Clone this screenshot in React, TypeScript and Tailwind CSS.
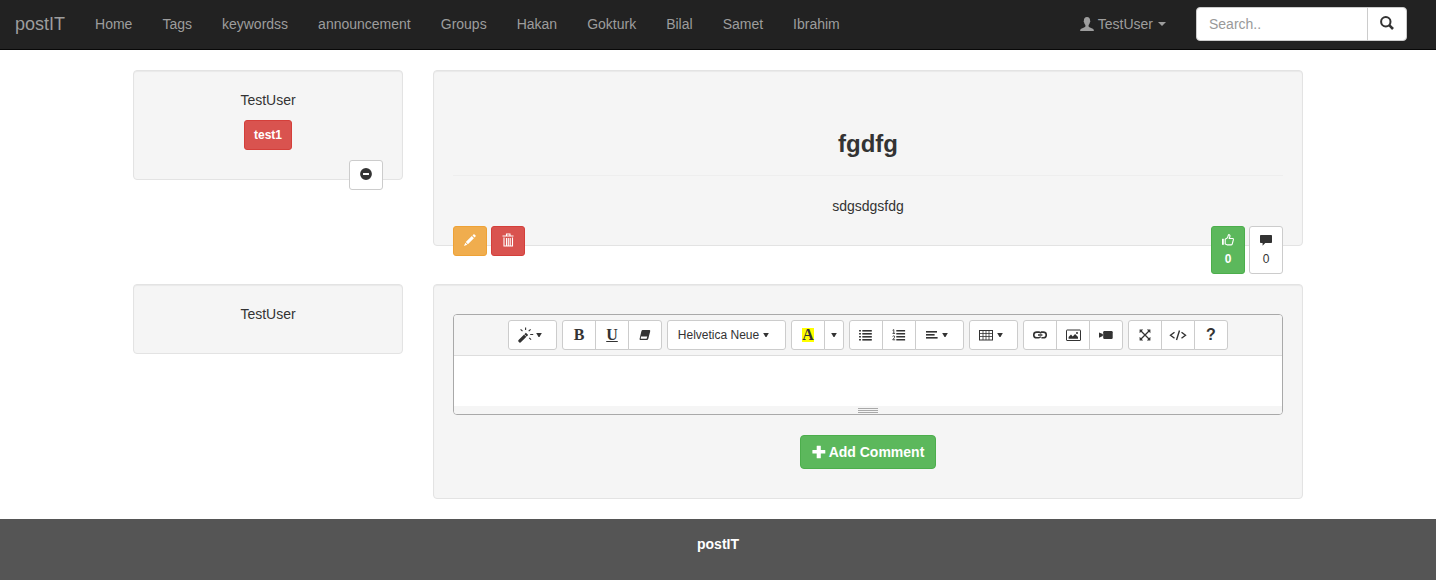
import type { ButtonHTMLAttributes, ReactNode } from "react";

const navLinks = ["Home", "Tags", "keywordss", "announcement", "Groups", "Hakan", "Gokturk", "Bilal", "Samet", "Ibrahim"];

function Well({ children, className = "" }: { children: ReactNode; className?: string }) {
  return (
    <section
      className={`rounded-[4px] border border-[#e3e3e3] bg-[#f5f5f5] p-[19px] text-center shadow-[inset_0_1px_1px_rgba(0,0,0,0.05)] ${className}`}
    >
      {children}
    </section>
  );
}

function Svg({ w, h, children }: { w: number; h: number; children: ReactNode }) {
  return (
    <svg width={w} height={h} viewBox={`0 0 ${w} ${h}`} fill="currentColor" aria-hidden="true" className="block shrink-0">
      {children}
    </svg>
  );
}

function Caret() {
  return (
    <Svg w={6} h={4}>
      <path d="M0.2 0h5.6L3.500 4h-1z" />
    </Svg>
  );
}

type ToolProps = ButtonHTMLAttributes<HTMLButtonElement> & { label: string };

function Tool({ label, className = "", children, ...rest }: ToolProps) {
  return (
    <button
      type="button"
      aria-label={label}
      className={`-ml-px flex h-[30px] items-center justify-center border border-[#ccc] bg-white text-[12px] leading-[18px] text-[#333] first:ml-0 first:rounded-l-[3px] last:rounded-r-[3px] ${className || "w-[34px]"}`}
      {...rest}
    >
      {children}
    </button>
  );
}

function Group({ children }: { children: ReactNode }) {
  return <div className="flex">{children}</div>;
}

function MagicIcon() {
  return (
    <Svg w={16} h={16}>
      <path d="M0.3 13.300 L7.900 5.700 L10.200 8 L2.600 15.500 Q1.600 15.900 .8 15.100 Q0 14.300 .3 13.300z" />
      <path d="M6 7.200l2.500 2.500" stroke="#fff" strokeWidth="0.8" />
      <path d="M7.600 0.500v2.600M2.600 2.300l1.900 1.900M12.600 2.300l-1.900 1.900M12.200 7.500h3M11.200 10.800l1.900 1.900" fill="none" stroke="currentColor" strokeWidth="1.1" />
    </Svg>
  );
}

function EraserIcon() {
  return (
    <Svg w={12} h={12}>
      <path d="M3.700 1h6.600q1.200 0 .9 1.200L9.300 9.800q-.4 1.200-1.500 1.200H1.500q-1.200 0-.9-1.200L2.400 2.200q.3-1.200 1.300-1.200z" />
      <path d="M2 7.400h6.300l-.7 2.400H1.700z" fill="#fff" />
    </Svg>
  );
}

function BulletsIcon() {
  return (
    <Svg w={14} h={12}>
      {[1, 4, 7, 10].map((y) => (
        <g key={y}>
          <rect x="0" y={y} width="2" height="1.6" rx=".5" />
          <rect x="3.3" y={y} width="9.5" height="1.6" />
        </g>
      ))}
    </Svg>
  );
}

function NumbersIcon() {
  return (
    <Svg w={14} h={12}>
      {[1, 4, 7, 10].map((y) => (
        <rect key={y} x="4.3" y={y} width="8.800" height="1.5" />
      ))}
      <path d="M0.6 1.300L1.800.6V4.400M0.500 4.400h2.600M0.600 7.400Q1.700 6.400 2.600 7.200Q3.200 8.200.7 10.800H3.200" fill="none" stroke="currentColor" strokeWidth="0.9" />
    </Svg>
  );
}

function AlignIcon() {
  return (
    <Svg w={12} h={10}>
      <rect x="0" y="1" width="11" height="1.6" />
      <rect x="0" y="4" width="8.6" height="1.6" />
      <rect x="0" y="7" width="11.6" height="1.6" />
    </Svg>
  );
}

function TableIcon() {
  return (
    <Svg w={14} h={12}>
      <path d="M4 1v10M7 1v10M10 1v10M.5 4.500h13M.5 7.500h13" fill="none" stroke="currentColor" strokeWidth="0.8" />
      <rect x=".5" y="1.500" width="13" height="9.500" fill="none" stroke="currentColor" strokeWidth="1" />
    </Svg>
  );
}

function LinkIcon() {
  return (
    <Svg w={14} h={8}>
      <path d="M6 1.100H3.600a2.800 2.800 0 0 0 0 5.700h2q1.400 0 2-1.300M8 1.100h2.400a2.800 2.800 0 0 1 0 5.700h-2M6 1.100q1.500.1 2.200 1.300M5 4h4.400" fill="none" stroke="currentColor" strokeWidth="1.6" />
    </Svg>
  );
}

function PictureIcon() {
  return (
    <Svg w={15} h={12}>
      <rect x=".5" y="1" width="14" height="10.500" rx=".5" fill="none" stroke="currentColor" />
      <path d="M2.600 9.700V7.900L5 5.600l1.700 1.800 2.400-2.500 2.900 3.100v1.700z" />
      <circle cx="11" cy="4" r="1" />
    </Svg>
  );
}

function VideoIcon() {
  return (
    <Svg w={14} h={8}>
      <path d="M0 1.400L3.800 3v2L0 6.800z" />
      <rect x="4.200" y="0" width="9.500" height="8" rx="1.200" />
    </Svg>
  );
}

function ExpandIcon() {
  return (
    <Svg w={12} h={12}>
      <path d="M1.500 1.500l9 9M10.500 1.500l-9 9" stroke="currentColor" strokeWidth="1.3" />
      <path d="M.6.6h3.600L.6 4.200zM11.400.6v3.600L7.800.6zM.6 11.400V7.800l3.600 3.600zM11.400 11.400H7.800l3.600-3.600z" />
    </Svg>
  );
}

function CodeIcon() {
  return (
    <Svg w={18} h={12}>
      <path d="M5.500 3.200L1.500 6.200l4 3M12.500 3.200l4 3-4 3M10.500 1.500L7.500 11" fill="none" stroke="currentColor" strokeWidth="1.400" />
    </Svg>
  );
}

function Toolbar() {
  return (
    <div className="flex flex-wrap justify-center gap-[5px] border-b border-[#ddd] bg-[#f5f5f5] py-[5px]">
      <Group>
        <Tool label="Style" className="w-[49px] gap-0.5 pr-1.5">
          <MagicIcon />
          <Caret />
        </Tool>
      </Group>
      <Group>
        <Tool label="Bold">
          <span className="font-['Liberation_Serif',serif] text-[16px] font-bold">B</span>
        </Tool>
        <Tool label="Underline">
          <span className="font-['Liberation_Serif',serif] text-[16px] font-bold underline decoration-1 underline-offset-1">U</span>
        </Tool>
        <Tool label="Remove font style">
          <EraserIcon />
        </Tool>
      </Group>
      <Group>
        <Tool label="Helvetica Neue" className="w-[119px] gap-1 pr-1.5">
          <span>Helvetica Neue</span>
          <Caret />
        </Tool>
      </Group>
      <Group>
        <Tool label="Recent color">
          <span className="flex h-[14px] w-[12px] items-center justify-center bg-[#ff0] font-['Liberation_Serif',serif] text-[16px] leading-[16px] font-bold">A</span>
        </Tool>
        <Tool label="More colors" className="w-[20px]">
          <Caret />
        </Tool>
      </Group>
      <Group>
        <Tool label="Unordered list">
          <BulletsIcon />
        </Tool>
        <Tool label="Ordered list">
          <NumbersIcon />
        </Tool>
        <Tool label="Paragraph" className="w-[49px] gap-1 pr-1.5">
          <AlignIcon />
          <Caret />
        </Tool>
      </Group>
      <Group>
        <Tool label="Table" className="w-[49px] gap-1 pr-1.5">
          <TableIcon />
          <Caret />
        </Tool>
      </Group>
      <Group>
        <Tool label="Link">
          <LinkIcon />
        </Tool>
        <Tool label="Picture">
          <PictureIcon />
        </Tool>
        <Tool label="Video">
          <VideoIcon />
        </Tool>
      </Group>
      <Group>
        <Tool label="Full screen">
          <ExpandIcon />
        </Tool>
        <Tool label="Code view">
          <CodeIcon />
        </Tool>
        <Tool label="Help">
          <span className="text-[16px] font-bold">?</span>
        </Tool>
      </Group>
    </div>
  );
}

function Navbar() {
  return (
    <header className="flex min-h-[50px] flex-wrap items-center justify-between border-b border-[#080808] bg-[#222] pr-[29px] pb-0.5 pl-[15px] text-[#9d9d9d]">
      <nav className="flex flex-wrap items-center gap-x-[30px]">
        <a href="#" className="text-[18px] leading-[20px]">postIT</a>
        {navLinks.map((name) => (
          <a key={name} href="#">{name}</a>
        ))}
      </nav>
      <div className="flex items-center gap-[30px]">
        <button type="button" className="flex items-center gap-1">
          <Svg w={14} h={14}>
            <path d="M7 0C4.900 0 3.800 1.500 3.900 3.700C3.500 4 3.600 5 4.100 5.300C4.300 6.600 4.800 7.400 5.400 8v1.500Q5.200 10 4 10.500L1.200 11.700Q.1 12.200.1 13.900h13.800q0-1.700-1.100-2.200L10 10.500Q8.800 10 8.600 9.500V8C9.200 7.400 9.700 6.600 9.900 5.300C10.400 5 10.500 4 10.100 3.700C10.200 1.500 9.100 0 7 0z" />
          </Svg>
          TestUser
          <Svg w={9} h={4}>
            <path d="M1 0h8L5 4z" />
          </Svg>
        </button>
        <form className="flex" onSubmit={(e) => e.preventDefault()}>
          <input
            type="text"
            aria-label="Search"
            placeholder="Search.."
            className="h-[34px] w-[172px] rounded-l-[4px] border border-[#ccc] bg-white px-3 text-[14px] text-[#555] placeholder:text-[#999]"
          />
          <button
            type="submit"
            aria-label="Submit search"
            className="-ml-px flex h-[34px] w-[40px] items-center justify-center rounded-r-[4px] border border-[#ccc] bg-white pb-0.5 text-[#333]"
          >
            <Svg w={14} h={14}>
              <circle cx="5.800" cy="5.800" r="4.700" fill="none" stroke="currentColor" strokeWidth="2" />
              <path d="M9.200 9.200L13 13" stroke="currentColor" strokeWidth="2.600" />
            </Svg>
          </button>
        </form>
      </div>
    </header>
  );
}

export default function App() {
  return (
    <div className="flex min-h-screen flex-col bg-white font-['Liberation_Sans',Arial,sans-serif] text-[14px] leading-[20px] text-[#333]">
      <Navbar />
      <main className="mx-auto w-full max-w-[1200px] px-[15px] py-5">
        <div className="grid grid-cols-12 items-start gap-x-[30px]">
          <Well className="col-span-3">
            <p>TestUser</p>
            <button type="button" className="mt-2.5 h-[30px] rounded-[3px] border border-[#d43f3a] bg-[#d9534f] px-[9px] text-[12px] leading-[18px] font-bold text-white">
              test1
            </button>
            <div className="mt-2.5 -mb-[30px] flex justify-end">
              <button type="button" aria-label="Remove" className="flex h-[30px] w-[34px] items-center justify-center rounded-[3px] border border-[#ccc] bg-white pb-0.5">
                <Svg w={12} h={12}>
                  <path fillRule="evenodd" d="M6 .1a5.900 5.900 0 1 1 0 11.800A5.900 5.900 0 0 1 6 .1zM3.300 5q-.3 0-.3.300v1.500q0 .3.300.3h5.400q.3 0 .3-.3V5.300q0-.3-.3-.3z" />
                </Svg>
              </button>
            </div>
          </Well>
          <Well className="col-span-9">
            <h3 className="mt-[41px] text-[24px] leading-[26px] font-bold">fgdfg</h3>
            <hr className="mt-[18px] mb-5 border-[#eee]" />
            <p>sdgsdgsfdg</p>
            <div className="mt-2.5 -mb-[48px] flex items-start justify-between">
              <div className="flex gap-1">
                <button type="button" aria-label="Edit" className="flex h-[30px] w-[34px] items-center justify-center rounded-[3px] border border-[#eea236] bg-[#f0ad4e] pb-0.5 text-white">
                  <Svg w={12} h={12}>
                    <path d="M9.400.4Q10 0 10.600.5L11.600 1.500Q12 2 11.500 2.600L10.600 3.500 8.500 1.400zM7.800 2.100L9.900 4.200 3.900 10.200 1.800 8.100zM1.300 8.700L3.300 10.700 0 12z" />
                  </Svg>
                </button>
                <button type="button" aria-label="Delete" className="flex h-[30px] w-[34px] items-center justify-center rounded-[3px] border border-[#d43f3a] bg-[#d9534f] pb-0.5 text-white">
                  <Svg w={12} h={14}>
                    <path d="M4.500 2.500v-1.500h3.500v1.500M.5 3h11M2 4.500v8.500h8.500V4.500M4.500 5v7.500M6.300 5v7.500M8.200 5v7.500" fill="none" stroke="currentColor" strokeWidth="1.100" />
                  </Svg>
                </button>
              </div>
              <div className="flex gap-1 text-[12px] leading-[18px]">
                <button type="button" aria-label="Like, 0" className="flex h-[48px] w-[34px] flex-col items-center justify-center gap-1 rounded-[3px] border border-[#4cae4c] bg-[#5cb85c] pt-0.5 font-bold text-white">
                  <Svg w={12} h={12}>
                    <rect x="0" y="4.800" width="1.800" height="6" />
                    <path d="M3.200 5.200L5.600 3.600 6.300 1.200Q6.600.5 7.300.7Q8.300 1.200 7.900 2.500L7.300 4.500H10.600Q11.600 4.700 11.400 5.700L10.300 9.800Q10 10.900 8.900 10.900H5.400L3.200 9.900z" fill="none" stroke="currentColor" strokeWidth="1.100" />
                  </Svg>
                  <span>0</span>
                </button>
                <button type="button" aria-label="Comments, 0" className="flex h-[48px] w-[34px] flex-col items-center justify-center gap-1 rounded-[3px] border border-[#ccc] bg-white pt-0.5">
                  <Svg w={12} h={12}>
                    <path d="M.8 1h10.400q.8 0 .8.800V8.200q0 .8-.8.800H5.200L2.600 11.800V9H.8q-.8 0-.8-.8V1.800q0-.8.8-.8z" />
                  </Svg>
                  <span>0</span>
                </button>
              </div>
            </div>
          </Well>
        </div>

        <div className="mt-[38px] grid grid-cols-12 items-start gap-x-[30px]">
          <Well className="col-span-3">
            <p className="mb-2.5">TestUser</p>
          </Well>
          <Well className="col-span-9">
            <div className="mt-2.5 overflow-hidden rounded-[4px] border border-[#a9a9a9] bg-white">
              <Toolbar />
              <textarea aria-label="Comment" className="block h-[50px] w-full resize-none bg-white p-2.5 outline-none" />
              <div className="flex h-[8px] flex-col items-center gap-px bg-[#f5f5f5] pt-[2px]">
                <div className="h-px w-5 bg-[#a9a9a9]" />
                <div className="h-px w-5 bg-[#a9a9a9]" />
                <div className="h-px w-5 bg-[#a9a9a9]" />
              </div>
            </div>
            <button type="button" className="mx-auto mt-5 mb-2.5 flex h-[34px] items-center gap-[3px] rounded-[4px] border border-[#4cae4c] bg-[#5cb85c] px-[11px] font-bold text-white">
              <Svg w={14} h={14}>
                <path d="M5 .7h3.500q.3 0 .3.300V5h4.200q.3 0 .3.300v3q0 .3-.3.300H8.800v4.400q0 .3-.3.300H5q-.3 0-.3-.300V8.600H.7q-.3 0-.3-.3v-3q0-.3.300-.3h4V1q0-.3.300-.3z" />
              </Svg>
              Add Comment
            </button>
          </Well>
        </div>
      </main>
      <footer className="flex-1 bg-[#555] pt-[15px] pb-5 text-center font-bold text-white">postIT</footer>
    </div>
  );
}
